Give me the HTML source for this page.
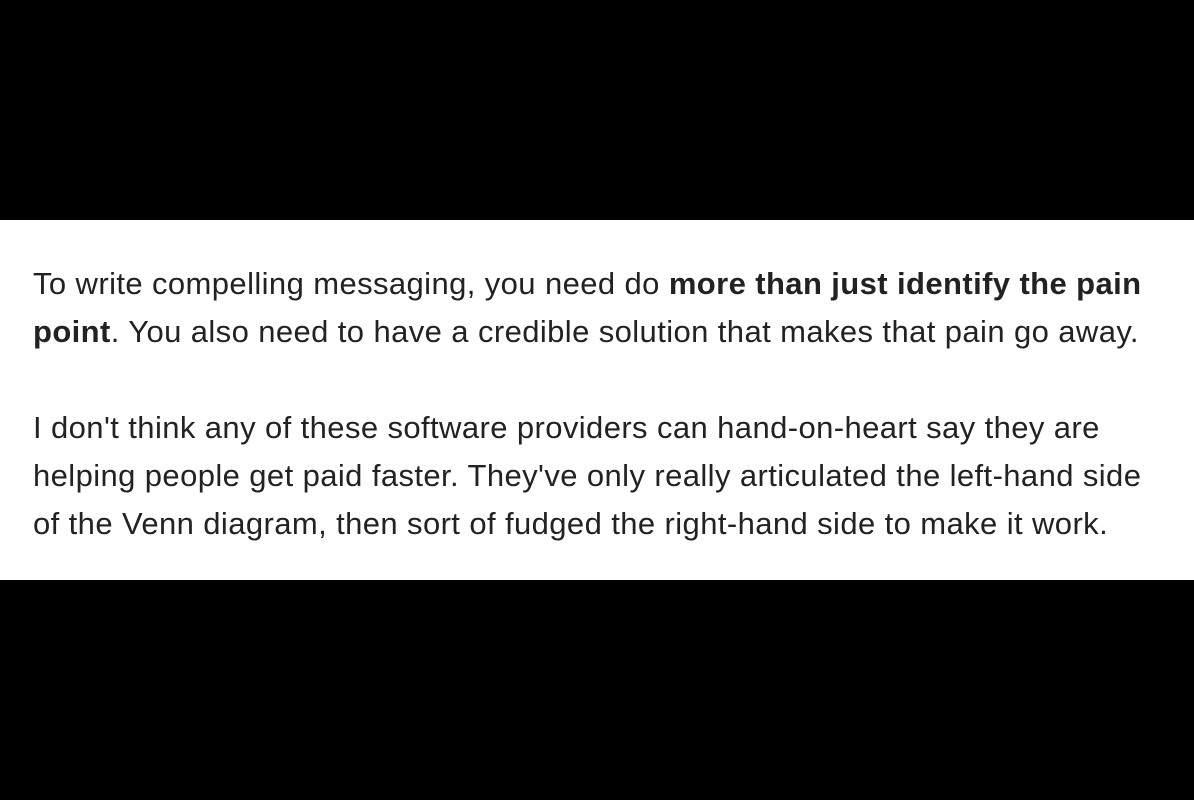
<!DOCTYPE html>
<html><head><meta charset="utf-8"><style>
html,body{margin:0;padding:0;background:#000;width:1194px;height:800px;overflow:hidden}
.w{position:absolute;top:220px;left:0;width:1194px;height:360px;background:#fff}
.t{position:absolute;left:33px;top:40px;font-family:"Liberation Sans",Arial,sans-serif;font-size:31px;letter-spacing:0.4px;line-height:48px;color:#222;white-space:nowrap}
.t div{height:48px}
b{font-weight:bold}
</style></head><body>
<div class="w"><div class="t">
<div>To write compelling messaging, you need do <b>more than just identify the pain</b></div>
<div><b>point</b>. You also need to have a credible solution that makes that pain go away.</div>
<div></div>
<div>I don't think any of these software providers can hand-on-heart say they are</div>
<div>helping people get paid faster. They've only really articulated the left-hand side</div>
<div>of the Venn diagram, then sort of fudged the right-hand side to make it work.</div>
</div></div>
</body></html>
